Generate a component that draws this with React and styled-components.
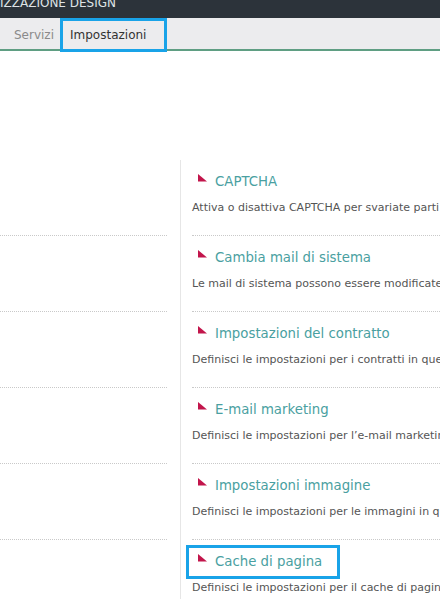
import styled, { createGlobalStyle } from 'styled-components'

const GlobalStyle = createGlobalStyle`
  html, body {
    margin: 0;
    padding: 0;
    background: #ffffff;
    overflow: hidden;
  }
  body {
    font-family: "DejaVu Sans", Verdana, sans-serif;
  }
`

const TopBar = styled.div`
  height: 18px;
  background: #2c333a;
  overflow: hidden;
`

const PageTitle = styled.div`
  margin-top: -2px;
  color: #dfe3e6;
  font-size: 12px;
  line-height: 11px;
  text-transform: uppercase;
  white-space: nowrap;
`

const TabBar = styled.div`
  display: flex;
  align-items: flex-end;
  gap: 2px;
  height: 31px;
  padding-left: 7px;
  background: #ececee;
  border-bottom: 2px solid #5f9e83;
`

const Tab = styled.div`
  display: flex;
  align-items: center;
  height: 28px;
  padding: 0 ${p => (p.$marked ? 18 : 7)}px 0 7px;
  font-size: 12px;
  color: ${p => (p.$active ? '#333333' : '#8a8a8a')};
  outline: ${p => (p.$marked ? '3px solid #19a3e8' : 'none')};
`

const Main = styled.div`
  display: flex;
  margin-top: 109px;
`

const LeftCol = styled.div`
  flex: none;
  width: 167px;
  margin-right: 13px;
`

const LeftRow = styled.div`
  height: 76px;
  box-sizing: border-box;
  border-bottom: 1px dotted #c9c9c9;
`

const RightCol = styled.div`
  flex: 1;
  min-width: 0;
  overflow: hidden;
  padding-left: 11px;
  border-left: 1px solid #e6e6e6;
`

const Item = styled.div`
  height: 76px;
  box-sizing: border-box;
  padding-top: 7px;
  border-bottom: 1px dotted #c9c9c9;
  white-space: nowrap;
`

const Title = styled.div`
  display: inline-flex;
  align-items: flex-start;
  gap: 8px;
  height: 28px;
  box-sizing: border-box;
  margin-left: -3px;
  padding: 6px 15px 6px 9px;
  font-size: 13.3px;
  line-height: 16px;
  color: #4a9fa1;
  outline: ${p => (p.$marked ? '3px solid #19a3e8' : 'none')};

  svg {
    flex: none;
  }
`

const Desc = styled.div`
  margin-top: 5px;
  font-size: 11px;
  line-height: 14px;
  color: #555555;
`

const Marker = () => (
  <svg width="9" height="8" viewBox="0 0 9 8">
    <polygon points="0,0 0,7.5 9,7.5" fill="#c2154b" />
  </svg>
)

const items = [
  { title: 'CAPTCHA', desc: 'Attiva o disattiva CAPTCHA per svariate parti del sito' },
  { title: 'Cambia mail di sistema', desc: 'Le mail di sistema possono essere modificate qui' },
  { title: 'Impostazioni del contratto', desc: 'Definisci le impostazioni per i contratti in questa sezione' },
  { title: 'E-mail marketing', desc: 'Definisci le impostazioni per l’e-mail marketing' },
  { title: 'Impostazioni immagine', desc: 'Definisci le impostazioni per le immagini in questa sezione' },
  { title: 'Cache di pagina', desc: 'Definisci le impostazioni per il cache di pagina', marked: true },
]

export default function App() {
  return (
    <>
      <GlobalStyle />
      <TopBar>
        <PageTitle>IZZAZIONE DESIGN</PageTitle>
      </TopBar>
      <TabBar>
        <Tab>Servizi</Tab>
        <Tab $active $marked>Impostazioni</Tab>
      </TabBar>
      <Main>
        <LeftCol>
          {items.map((it, i) => (
            <LeftRow key={i} />
          ))}
        </LeftCol>
        <RightCol>
          {items.map(it => (
            <Item key={it.title}>
              <Title $marked={it.marked}>
                <Marker />
                <span>{it.title}</span>
              </Title>
              <Desc>{it.desc}</Desc>
            </Item>
          ))}
        </RightCol>
      </Main>
    </>
  )
}
